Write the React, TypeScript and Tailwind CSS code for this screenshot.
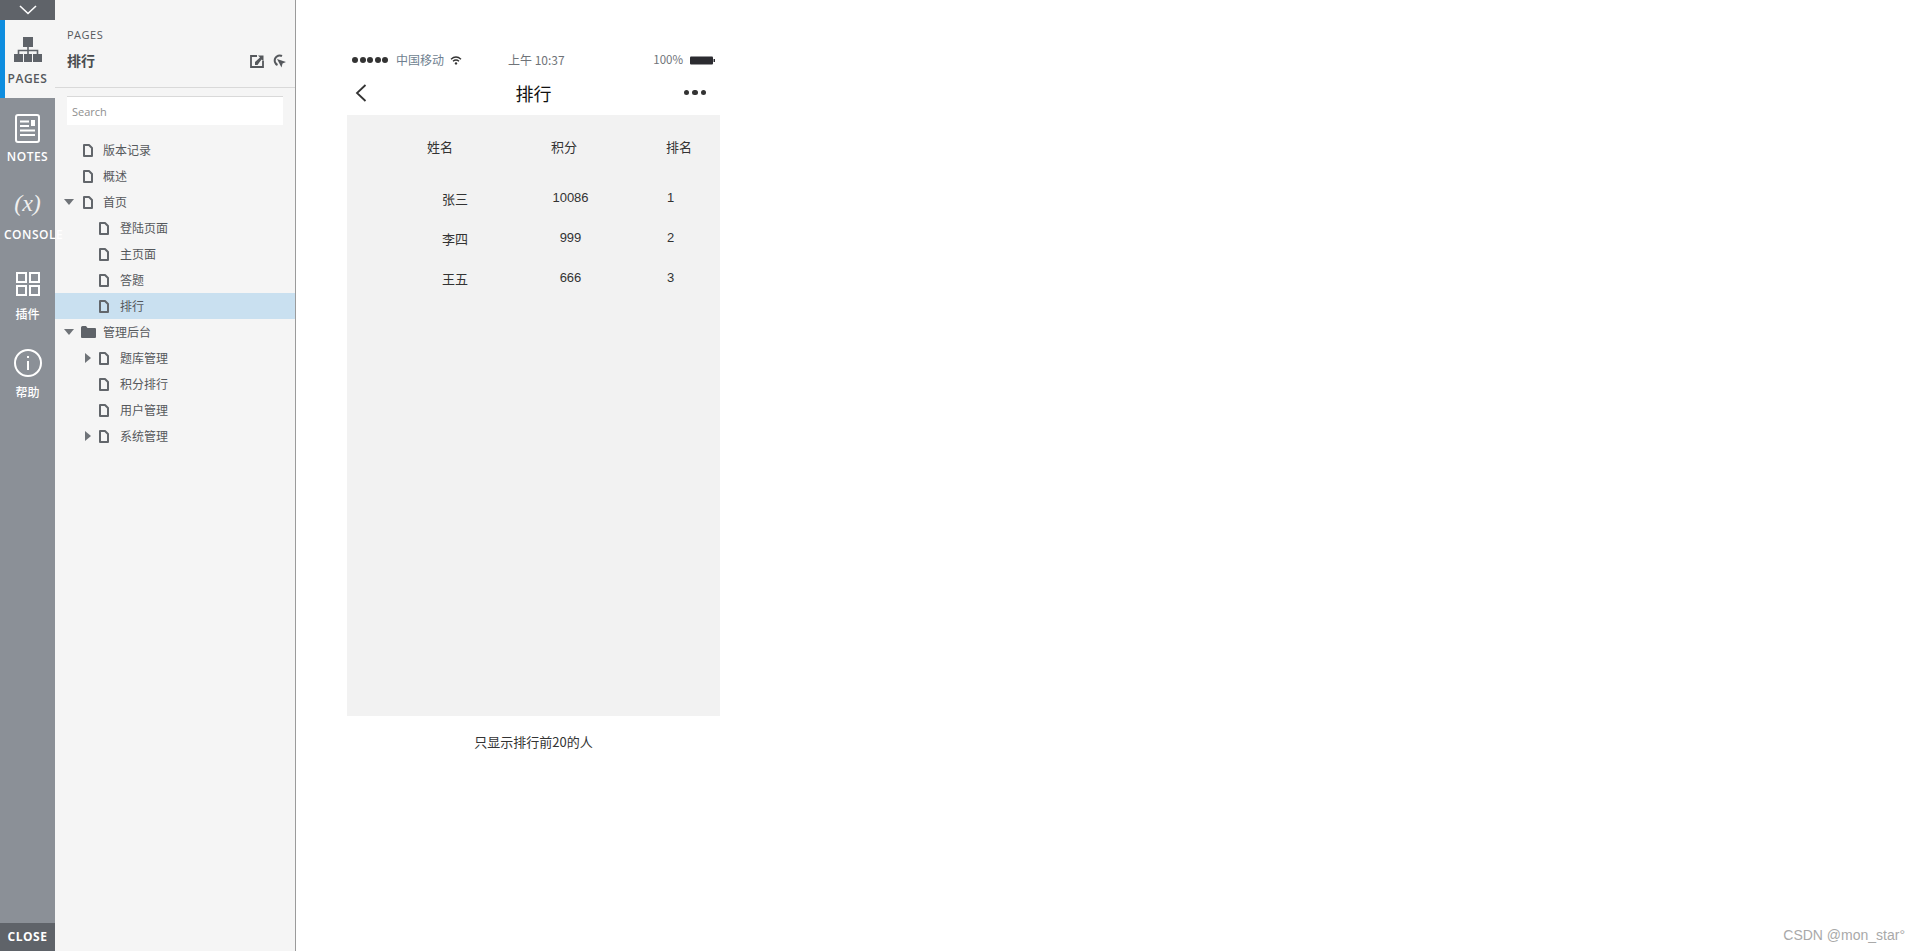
import React from "react";

const uiFont = "font-['Open_Sans','Noto_Sans_CJK_SC',sans-serif]";
const pageFont = "font-['Noto_Sans_CJK_SC','Liberation_Sans',sans-serif]";

const PageIcon = () => (
  <svg width="10" height="13" viewBox="0 0 10 13" className="shrink-0">
    <path d="M1 1H6L9 4V12H1Z" fill="none" stroke="#62666b" strokeWidth="2" strokeLinejoin="round" />
  </svg>
);

const FolderIcon = () => (
  <svg width="15" height="12" viewBox="0 0 15 12" className="shrink-0">
    <path d="M0 1.5Q0 0 1.5 0H5L6.5 2H14Q15 2 15 3V11Q15 12 14 12H1Q0 12 0 11Z" fill="#5f6369" />
  </svg>
);

const Caret = ({ open }: { open: boolean }) =>
  open ? (
    <svg width="10" height="6" viewBox="0 0 10 6" className="shrink-0">
      <path d="M0 0H10L5 6Z" fill="#6f7378" />
    </svg>
  ) : (
    <svg width="6" height="10" viewBox="0 0 6 10" className="shrink-0">
      <path d="M0 0V10L6 5Z" fill="#6f7378" />
    </svg>
  );

interface TreeItem {
  label: string;
  depth: number;
  caret?: "open" | "closed";
  folder?: boolean;
  active?: boolean;
}

const tree: TreeItem[] = [
  { label: "版本记录", depth: 0 },
  { label: "概述", depth: 0 },
  { label: "首页", depth: 0, caret: "open" },
  { label: "登陆页面", depth: 1 },
  { label: "主页面", depth: 1 },
  { label: "答题", depth: 1 },
  { label: "排行", depth: 1, active: true },
  { label: "管理后台", depth: 0, caret: "open", folder: true },
  { label: "题库管理", depth: 1, caret: "closed" },
  { label: "积分排行", depth: 1 },
  { label: "用户管理", depth: 1 },
  { label: "系统管理", depth: 1, caret: "closed" },
];

const TreeRow = ({ item }: { item: TreeItem }) => (
  <div className={`h-[26px] flex items-center ${item.active ? "bg-[#c9e0f0]" : ""}`}>
    {item.depth === 0 ? (
      <>
        <div className="w-[9px] ml-[9px] flex justify-center">
          {item.caret && <Caret open={item.caret === "open"} />}
        </div>
        <div className="w-[30px] flex justify-center">
          {item.folder ? <FolderIcon /> : <PageIcon />}
        </div>
      </>
    ) : (
      <>
        <div className="w-[10px] ml-[28px] flex justify-center">
          {item.caret && <Caret open={false} />}
        </div>
        <div className="w-[27px] flex justify-center pr-[5px]">
          <PageIcon />
        </div>
      </>
    )}
    <span className="text-[12px] leading-none text-[#55585c]">{item.label}</span>
  </div>
);

const RailItem = ({
  label,
  icon,
  active,
  overflowLeft,
  cjk,
}: {
  label: string;
  icon: React.ReactNode;
  active?: boolean;
  overflowLeft?: boolean;
  cjk?: boolean;
}) => (
  <div
    className={`h-[78px] w-[55px] flex flex-col ${
      active ? "bg-[#f5f5f5] shadow-[inset_5px_0_0_#0e8ddf] text-[#55585c]" : "text-white"
    }`}
  >
    <div className="h-[48px] flex items-end justify-center">{icon}</div>
    <div
      className={`text-[12px] leading-[20px] whitespace-nowrap ${
        cjk ? "font-medium mt-[3px]" : "font-semibold tracking-[0.5px] mt-[1px]"
      } ${overflowLeft ? "pl-[4px]" : "text-center"}`}
    >
      {label}
    </div>
  </div>
);

const rows = [
  { name: "张三", score: "10086", rank: "1" },
  { name: "李四", score: "999", rank: "2" },
  { name: "王五", score: "666", rank: "3" },
];

export default function App() {
  return (
    <div className={`h-[951px] w-full flex overflow-hidden bg-white ${uiFont}`}>
      {/* left rail */}
      <div className="w-[55px] shrink-0 bg-[#8b9097] flex flex-col relative z-10">
        <div className="h-[20px] bg-[#5f6369] flex items-center justify-center">
          <svg width="18" height="10" viewBox="0 0 18 10">
            <path d="M1 1L9 8.5L17 1" fill="none" stroke="#fff" strokeWidth="1.6" />
          </svg>
        </div>
        <RailItem
          active
          label="PAGES"
          icon={
            <svg width="28" height="26" viewBox="0 0 28 26" className="mb-[5px]">
              <path d="M9 0H19V10H9Z M0 17H9V25H0Z M10 17H18V25H10Z M19 17H28V25H19Z" fill="#5f6369" />
              <path d="M14 10V17 M4.5 17V13.5H23.5V17" fill="none" stroke="#5f6369" strokeWidth="1.6" />
            </svg>
          }
        />
        <RailItem
          label="NOTES"
          icon={
            <svg width="25" height="29" viewBox="0 0 25 29" className="mb-[3px]">
              <rect x="1" y="1" width="23" height="27" rx="2" fill="none" stroke="#fff" strokeWidth="2" />
              <path d="M5 7.5H14 M5 12H14 M5 16.5H20 M5 21H20" stroke="#fff" strokeWidth="2" />
              <path d="M16 6H20V12H16Z" fill="#fff" />
            </svg>
          }
        />
        <RailItem
          label="CONSOLE"
          overflowLeft
          icon={
            <span className="font-['Liberation_Serif',serif] italic text-[24px] leading-none text-[#f0f0f0] mb-[9px]">
              (x)
            </span>
          }
        />
        <RailItem
          cjk
          label="插件"
          icon={
            <svg width="24" height="24" viewBox="0 0 24 24" className="mb-[6px]">
              <path
                d="M1 1H10V10H1Z M14 1H23V10H14Z M1 14H10V23H1Z M14 14H23V23H14Z"
                fill="none"
                stroke="#fff"
                strokeWidth="2"
              />
            </svg>
          }
        />
        <RailItem
          cjk
          label="帮助"
          icon={
            <svg width="28" height="28" viewBox="0 0 28 28" className="mb-[3px]">
              <circle cx="14" cy="14" r="13" fill="none" stroke="#fff" strokeWidth="2" />
              <path d="M14 12V21" stroke="#fff" strokeWidth="2" />
              <rect x="13" y="7" width="2" height="2" fill="#fff" />
            </svg>
          }
        />
        <div className="mt-auto h-[28px] bg-[#5f6369] text-white text-[12px] font-bold tracking-[0.5px] flex items-center justify-center">
          CLOSE
        </div>
      </div>

      {/* pages panel */}
      <div className="w-[241px] shrink-0 bg-[#f5f5f5] border-r border-[#9b9b9b]">
        <div className="h-[88px] border-b border-[#d9d9d9] pl-[12px] pr-[9px] pt-[26px]">
          <div className="text-[11px] leading-[18px] tracking-[0.5px] text-[#55585c]">PAGES</div>
          <div className="mt-[7px] flex items-center justify-between">
            <span className="text-[14px] leading-[20px] font-semibold text-[#4a4d50]">排行</span>
            <div className="flex items-center gap-[8px]">
              <svg width="14" height="13" viewBox="0 0 14 13">
                <path d="M7 1H1V12H13V6" fill="none" stroke="#55585c" strokeWidth="1.8" />
                <path d="M13.5 0.5H8L10 2.5L5 7V10H7.5L11.5 4.5L13.5 6.5Z" fill="#55585c" />
              </svg>
              <svg width="14" height="14" viewBox="0 0 14 14">
                <path d="M10 2A5 5 0 1 0 5.5 11" fill="none" stroke="#55585c" strokeWidth="2" />
                <path d="M5 5L14 8L10.5 9.5L9.5 13.5Z" fill="#55585c" />
              </svg>
            </div>
          </div>
        </div>
        <div className="px-[12px] pt-[8px] pb-[12px]">
          <div className="h-[29px] bg-white border-t border-[#d9d9d9] flex items-center pl-[5px] pt-[2px] text-[11px] text-[#8f8f8f]">
            Search
          </div>
        </div>
        <div className={pageFont}>
          {tree.map((item) => (
            <TreeRow key={item.label} item={item} />
          ))}
        </div>
      </div>

      {/* prototype canvas */}
      <div className={`relative flex-1 pl-[51px] pt-[47px] ${pageFont}`}>
        <div className="w-[373px]">
          <div className="h-[26px] flex items-center text-[12px] text-[#6f7378]">
            <div className="w-[49px] pl-[5px] flex gap-[1.5px]">
              {[0, 1, 2, 3, 4].map((i) => (
                <span key={i} className="w-[6px] h-[6px] rounded-full bg-[#333]" />
              ))}
            </div>
            <span className="text-[#6f7f90]">中国移动</span>
            <svg width="12" height="9" viewBox="0 0 12 9" className="ml-[6px]">
              <path d="M1 3.2Q6 -1 11 3.2 M3 5.2Q6 2.6 9 5.2" fill="none" stroke="#333" strokeWidth="1.4" />
              <circle cx="6" cy="7.4" r="1.2" fill="#333" />
            </svg>
            <span className="ml-[46px]">上午 10:37</span>
            <span className="ml-auto text-[11.5px]">100%</span>
            <svg width="25" height="9" viewBox="0 0 25 9" className="ml-[7px] mr-[5px]">
              <rect x="0" y="0.5" width="23" height="8" rx="1" fill="#2b2b30" />
              <rect x="23.5" y="3" width="1.5" height="3" fill="#2b2b30" />
            </svg>
          </div>
          <div className="h-[42px] grid grid-cols-[1fr_auto_1fr] items-center text-[#222] pb-[3px]">
            <svg width="12" height="18" viewBox="0 0 12 18" className="ml-[8px]">
              <path d="M10.5 1L2 9L10.5 17" fill="none" stroke="#333" strokeWidth="1.8" />
            </svg>
            <span className="text-[18px] leading-none text-[#111]">排行</span>
            <div className="flex gap-[3px] justify-end mr-[14px]">
              {[0, 1, 2].map((i) => (
                <span key={i} className="w-[5.5px] h-[5.5px] rounded-full bg-[#333]" />
              ))}
            </div>
          </div>
          <div className="h-[601px] bg-[#f2f2f2] text-[13px] text-[#333] pt-[22px]">
            <div className="grid grid-cols-[204px_39px_1fr] gap-x-0 h-[20px] items-center leading-[20px]">
              <span className="pl-[80px]">姓名</span>
              <span>积分</span>
              <span className="pl-[76px]">排名</span>
            </div>
            <div className="mt-[30px] flex flex-col gap-[20px]">
              {rows.map((r) => (
                <div key={r.rank} className="grid grid-cols-[204px_39px_1fr] h-[20px] items-center leading-[20px]">
                  <span className="pl-[95px] pt-[2px]">{r.name}</span>
                  <span className="text-center font-['Liberation_Sans',sans-serif]">{r.score}</span>
                  <span className="pl-[77px] font-['Liberation_Sans',sans-serif]">{r.rank}</span>
                </div>
              ))}
            </div>
          </div>
          <div className="mt-[16px] text-center text-[13px] leading-[20px] text-[#333]">只显示排行前20的人</div>
        </div>
        <div className="absolute right-[15px] bottom-[5px] font-['Liberation_Sans',sans-serif] text-[14px] text-[#a9a9a9]">
          CSDN @mon_star°
        </div>
      </div>
    </div>
  );
}
